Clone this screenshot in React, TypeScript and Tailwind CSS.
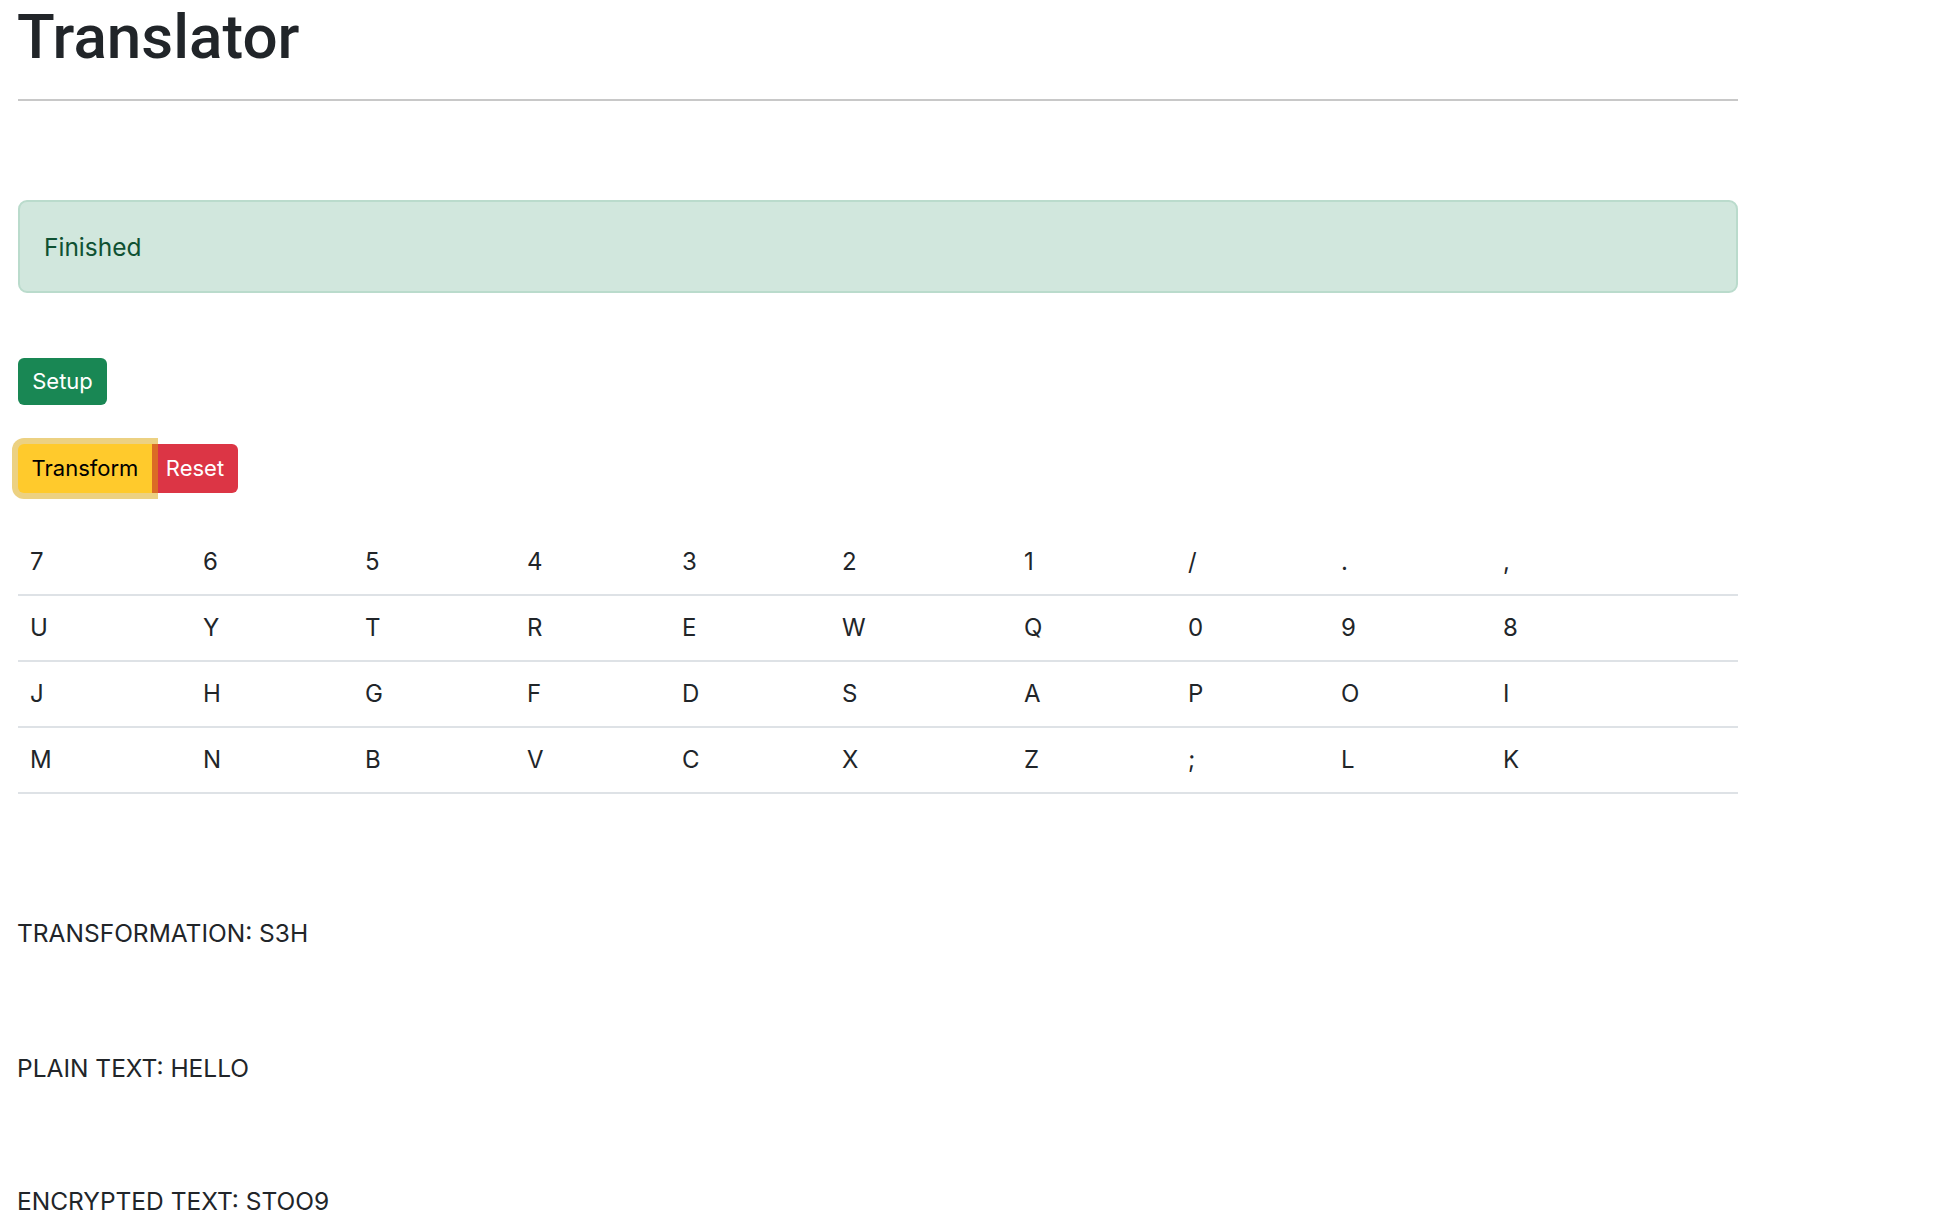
import React from "react";

const rows = [
  ["7", "6", "5", "4", "3", "2", "1", "/", ".", ","],
  ["U", "Y", "T", "R", "E", "W", "Q", "0", "9", "8"],
  ["J", "H", "G", "F", "D", "S", "A", "P", "O", "I"],
  ["M", "N", "B", "V", "C", "X", "Z", ";", "L", "K"],
];

// column widths measured off the reference (auto layout there)
const colW = [
  "w-[173px]",
  "w-[162px]",
  "w-[162px]",
  "w-[155px]",
  "w-[160px]",
  "w-[182px]",
  "w-[164px]",
  "w-[153px]",
  "w-[162px]",
  "w-[247px]",
];

const App = () => {
  return (
    <div className="pl-[18px] w-[1738px] text-[#212529] [font-family:Inter,sans-serif]">
      <h1 className="text-[62px] font-medium leading-[1.2] -ml-[1px] [font-family:Roboto,sans-serif]">
        Translator
      </h1>
      <hr className="mt-[25px] border-t-2 border-[#c8c8c8]" />

      <div className="mt-[99px] h-[93px] flex items-center px-[24px] rounded-[9px] border-2 border-[#badbcc] bg-[#d1e7dd] text-[#0f5132] text-[24.5px]">
        Finished
      </div>

      <button className="mt-[65px] h-[47px] w-[89px] flex items-center justify-center rounded-[6px] bg-[#198754] text-white text-[22px]">
        Setup
      </button>

      <div className="mt-[39px] flex">
        <button className="relative z-10 h-[49px] w-[134px] flex items-center justify-center rounded-l-[6px] bg-[#ffca2c] text-black text-[22px] shadow-[0_0_0_6px_rgba(217,164,6,0.5)]">
          Transform
        </button>
        <button className="h-[49px] w-[86px] flex items-center justify-center rounded-r-[6px] bg-[#dc3545] text-white text-[22px]">
          Reset
        </button>
      </div>

      <table className="mt-[37px] w-full table-fixed border-collapse">
        <colgroup>
          {colW.map((w, i) => (
            <col key={i} className={w} />
          ))}
        </colgroup>
        <tbody>
          {rows.map((row, i) => (
            <tr key={i}>
              {row.map((c, j) => (
                <td
                  key={j}
                  className="px-[12px] py-[14px] text-[24px] leading-[36px] border-b-2 border-[#dee2e6]"
                >
                  {c}
                </td>
              ))}
            </tr>
          ))}
        </tbody>
      </table>

      <div className="flex flex-col text-[24.5px] leading-[36px] -ml-[1px]">
        <p className="mt-[121px]">TRANSFORMATION: S3H</p>
        <p className="mt-[99px]">PLAIN TEXT: HELLO</p>
        <p className="mt-[97px]">ENCRYPTED TEXT: STOO9</p>
      </div>
    </div>
  );
};

export default App;
